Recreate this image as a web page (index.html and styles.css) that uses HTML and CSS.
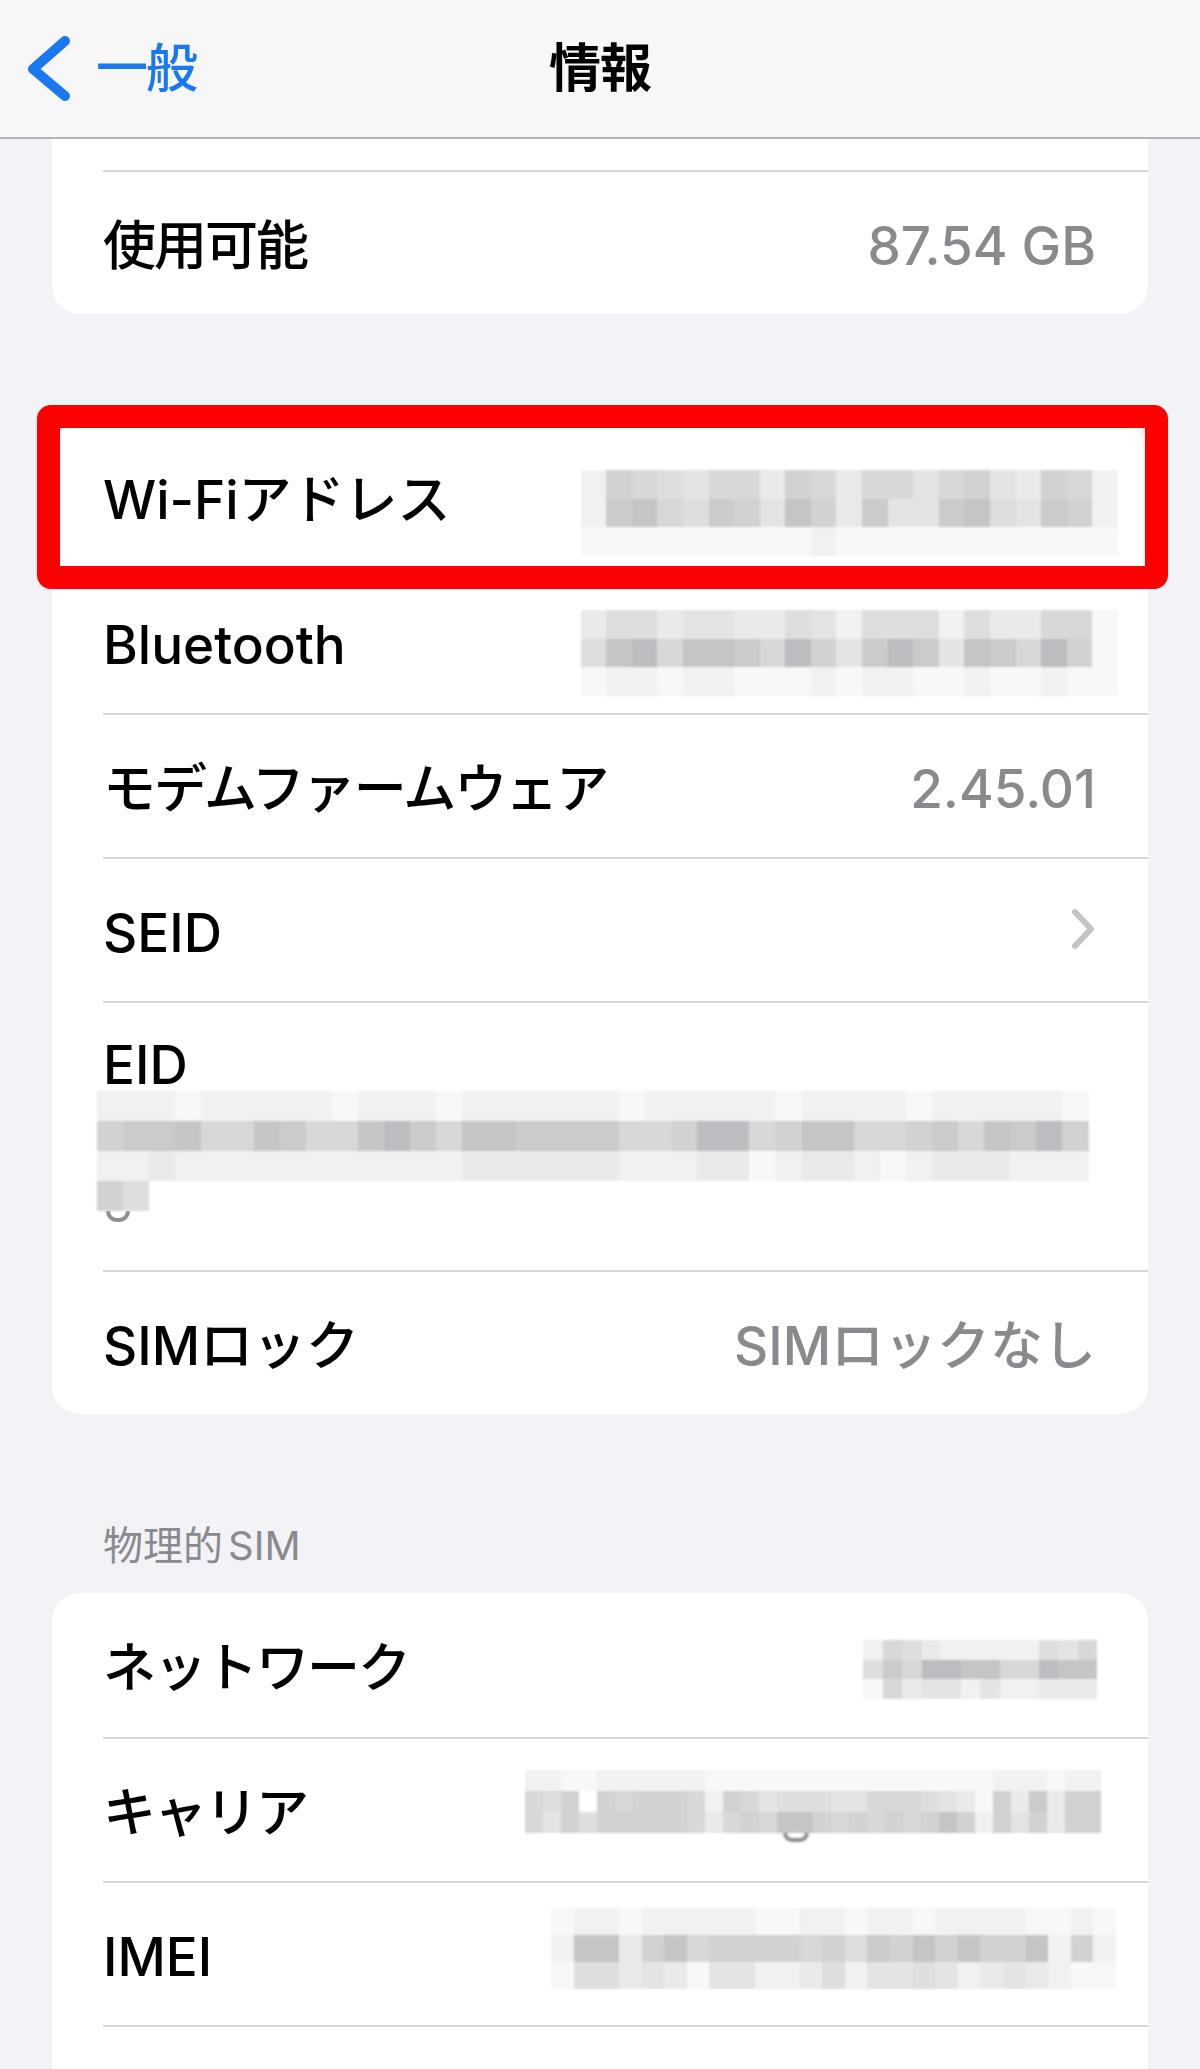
FILE: index.html
```html
<!DOCTYPE html>
<html lang="ja">
<head>
<meta charset="utf-8">
<title>情報</title>
<link rel="stylesheet" href="styles.css">
</head>
<body>
<header class="nav">
  <div class="nav-back">
    <svg class="chev-back" width="48" height="72" viewBox="0 0 48 72"><path d="M41 8 L9 36 L41 63" /></svg>
    <span class="back-label">一般</span>
  </div>
  <h1 class="nav-title">情報</h1>
  <div class="nav-right"></div>
</header>

<main class="content">
  <section class="card card-top">
    <div class="stub"></div>
    <div class="row">
      <span class="label ja">使用可能</span>
      <span class="value">87.54 GB</span>
    </div>
  </section>

  <section class="card card-gap">
    <div class="row row-hl">
      <span class="label">Wi-Fiアドレス</span>
      <div class="mosaic m-wifi">
        <i class="g1"></i><i class="g6"></i><i class="g5"></i><i class="g4"></i><i class="g3"></i><i class="g5"></i><i class="g5"></i><i class="g2"></i><i class="g6"></i><i class="g5"></i><i class="g2"></i><i class="g5"></i><i class="g5"></i><i class="g3"></i><i class="g5"></i><i class="g6"></i><i class="g3"></i><i class="g2"></i><i class="g6"></i><i class="g5"></i><i class="g1"></i>
        <i class="g1"></i><i class="g7"></i><i class="g8"></i><i class="g5"></i><i class="g4"></i><i class="g7"></i><i class="g6"></i><i class="g3"></i><i class="g8"></i><i class="g6"></i><i class="g2"></i><i class="g7"></i><i class="g3"></i><i class="g3"></i><i class="g7"></i><i class="g8"></i><i class="g4"></i><i class="g3"></i><i class="g7"></i><i class="g6"></i><i class="g1"></i>
        <i class="g0"></i><i class="g0"></i><i class="g0"></i><i class="g0"></i><i class="g0"></i><i class="g0"></i><i class="g0"></i><i class="g0"></i><i class="g0"></i><i class="g1"></i><i class="g0"></i><i class="g0"></i><i class="g0"></i><i class="g0"></i><i class="g0"></i><i class="g0"></i><i class="g0"></i><i class="g0"></i><i class="g0"></i><i class="g0"></i><i class="g0"></i>
      </div>
      <div class="highlight"></div>
    </div>
    <div class="row">
      <span class="label">Bluetooth</span>
      <div class="mosaic m-bt">
        <i class="g2"></i><i class="g4"></i><i class="g4"></i><i class="g2"></i><i class="g3"></i><i class="g3"></i><i class="g2"></i><i class="g2"></i><i class="g4"></i><i class="g3"></i><i class="g1"></i><i class="g4"></i><i class="g4"></i><i class="g4"></i><i class="g1"></i><i class="g4"></i><i class="g2"></i><i class="g2"></i><i class="g5"></i><i class="g5"></i><i class="g0"></i>
        <i class="g4"></i><i class="g8"></i><i class="g9"></i><i class="g5"></i><i class="g8"></i><i class="g8"></i><i class="g7"></i><i class="g5"></i><i class="g9"></i><i class="g6"></i><i class="g3"></i><i class="g7"></i><i class="g9"></i><i class="g7"></i><i class="g3"></i><i class="g8"></i><i class="g7"></i><i class="g5"></i><i class="g9"></i><i class="g6"></i><i class="g0"></i>
        <i class="g0"></i><i class="g1"></i><i class="g1"></i><i class="g0"></i><i class="g1"></i><i class="g1"></i><i class="g0"></i><i class="g0"></i><i class="g0"></i><i class="g1"></i><i class="g0"></i><i class="g1"></i><i class="g1"></i><i class="g0"></i><i class="g0"></i><i class="g1"></i><i class="g0"></i><i class="g0"></i><i class="g1"></i><i class="g0"></i><i class="g0"></i>
      </div>
    </div>
    <div class="row">
      <span class="label ja">モデムファームウェア</span>
      <span class="value">2.45.01</span>
    </div>
    <div class="row">
      <span class="label">SEID</span>
      <svg class="chev" width="26" height="44" viewBox="0 0 26 44"><path d="M5 5 L21 22 L5 39" /></svg>
    </div>
    <div class="row row-eid">
      <span class="label">EID</span>
      <div class="mosaic m-eid">
        <i class="g1"></i><i class="g1"></i><i class="g1"></i><i class="g0"></i><i class="g1"></i><i class="g1"></i><i class="g1"></i><i class="g1"></i><i class="g1"></i><i class="g0"></i><i class="g1"></i><i class="g1"></i><i class="g1"></i><i class="g0"></i><i class="g1"></i><i class="g1"></i><i class="g1"></i><i class="g1"></i><i class="g1"></i><i class="g1"></i><i class="g0"></i><i class="g1"></i><i class="g1"></i><i class="g1"></i><i class="g1"></i><i class="g1"></i><i class="g0"></i><i class="g1"></i><i class="g1"></i><i class="g1"></i><i class="g1"></i><i class="g0"></i><i class="g1"></i><i class="g1"></i><i class="g1"></i><i class="g1"></i><i class="g1"></i><i class="g0"></i>
        <i class="g6"></i><i class="g7"></i><i class="g7"></i><i class="g8"></i><i class="g5"></i><i class="g5"></i><i class="g8"></i><i class="g7"></i><i class="g5"></i><i class="g5"></i><i class="g8"></i><i class="g9"></i><i class="g7"></i><i class="g5"></i><i class="g8"></i><i class="g8"></i><i class="g7"></i><i class="g7"></i><i class="g7"></i><i class="g7"></i><i class="g5"></i><i class="g5"></i><i class="g6"></i><i class="g9"></i><i class="g9"></i><i class="g5"></i><i class="g6"></i><i class="g8"></i><i class="g8"></i><i class="g5"></i><i class="g5"></i><i class="g6"></i><i class="g7"></i><i class="g5"></i><i class="g8"></i><i class="g7"></i><i class="g9"></i><i class="g6"></i>
        <i class="g1"></i><i class="g1"></i><i class="g2"></i><i class="g1"></i><i class="g1"></i><i class="g1"></i><i class="g1"></i><i class="g1"></i><i class="g1"></i><i class="g1"></i><i class="g1"></i><i class="g1"></i><i class="g1"></i><i class="g1"></i><i class="g2"></i><i class="g2"></i><i class="g2"></i><i class="g2"></i><i class="g2"></i><i class="g2"></i><i class="g1"></i><i class="g1"></i><i class="g1"></i><i class="g2"></i><i class="g2"></i><i class="g0"></i><i class="g1"></i><i class="g2"></i><i class="g2"></i><i class="g1"></i><i class="g0"></i><i class="g1"></i><i class="g2"></i><i class="g2"></i><i class="g2"></i><i class="g1"></i><i class="g1"></i><i class="g1"></i>
        <i class="g6"></i><i class="g4"></i>
      </div>
      <span class="tail tail-eid"></span>
    </div>
    <div class="row">
      <span class="label">SIMロック</span>
      <span class="value">SIMロックなし</span>
    </div>
  </section>

  <h2 class="section-header">物理的<span class="hdr-latin">SIM</span></h2>

  <section class="card">
    <div class="row">
      <span class="label ja">ネットワーク</span>
      <div class="mosaic m-net">
        <i class="g1"></i><i class="g5"></i><i class="g4"></i><i class="g2"></i><i class="g1"></i><i class="g1"></i><i class="g1"></i><i class="g1"></i><i class="g1"></i><i class="g4"></i><i class="g3"></i><i class="g5"></i>
        <i class="g4"></i><i class="g7"></i><i class="g5"></i><i class="g9"></i><i class="g9"></i><i class="g8"></i><i class="g8"></i><i class="g5"></i><i class="g5"></i><i class="g9"></i><i class="g8"></i><i class="g8"></i>
        <i class="g0"></i><i class="g5"></i><i class="g2"></i><i class="g3"></i><i class="g3"></i><i class="g1"></i><i class="g3"></i><i class="g1"></i><i class="g1"></i><i class="g2"></i><i class="g2"></i><i class="g2"></i>
      </div>
    </div>
    <div class="row">
      <span class="label ja">キャリア</span>
      <div class="mosaic m-carrier">
        <i class="g1"></i><i class="g1"></i><i class="g0"></i><i class="g0"></i><i class="g1"></i><i class="g1"></i><i class="g1"></i><i class="g1"></i><i class="g1"></i><i class="g1"></i><i class="g0"></i><i class="g0"></i><i class="g0"></i><i class="g0"></i><i class="g0"></i><i class="g0"></i><i class="g0"></i><i class="g0"></i><i class="g0"></i><i class="g0"></i><i class="g0"></i><i class="g0"></i><i class="g0"></i><i class="g0"></i><i class="g0"></i><i class="g0"></i><i class="g1"></i><i class="g1"></i><i class="g1"></i><i class="g0"></i><i class="g1"></i><i class="g1"></i>
        <i class="g5"></i><i class="g4"></i><i class="g6"></i><i class="w"></i><i class="g6"></i><i class="g5"></i><i class="g6"></i><i class="g6"></i><i class="g6"></i><i class="g5"></i><i class="g1"></i><i class="g6"></i><i class="g5"></i><i class="g3"></i><i class="g4"></i><i class="g4"></i><i class="g4"></i><i class="g3"></i><i class="g3"></i><i class="g5"></i><i class="g5"></i><i class="g5"></i><i class="g4"></i><i class="g3"></i><i class="g2"></i><i class="g0"></i><i class="g6"></i><i class="g2"></i><i class="g7"></i><i class="g2"></i><i class="g6"></i><i class="g6"></i>
        <i class="g5"></i><i class="g3"></i><i class="g6"></i><i class="g4"></i><i class="g6"></i><i class="g6"></i><i class="g6"></i><i class="g6"></i><i class="g6"></i><i class="g5"></i><i class="g2"></i><i class="g5"></i><i class="g6"></i><i class="g5"></i><i class="g8"></i><i class="g8"></i><i class="g6"></i><i class="g5"></i><i class="g6"></i><i class="g5"></i><i class="g6"></i><i class="g5"></i><i class="g6"></i><i class="g8"></i><i class="g6"></i><i class="g1"></i><i class="g6"></i><i class="g3"></i><i class="g6"></i><i class="g2"></i><i class="g6"></i><i class="g6"></i>
        <span class="tail tail-g"></span>
      </div>
    </div>
    <div class="row">
      <span class="label">IMEI</span>
      <div class="mosaic m-imei">
        <i class="g0"></i><i class="g1"></i><i class="g1"></i><i class="g0"></i><i class="g1"></i><i class="g1"></i><i class="g1"></i><i class="g1"></i><i class="g1"></i><i class="g0"></i><i class="g0"></i><i class="g1"></i><i class="g1"></i><i class="g0"></i><i class="g1"></i><i class="g1"></i><i class="g0"></i><i class="g1"></i><i class="g1"></i><i class="g1"></i><i class="g1"></i><i class="g0"></i><i class="g0"></i><i class="g1"></i><i class="g0"></i>
        <i class="g1"></i><i class="g8"></i><i class="g8"></i><i class="g2"></i><i class="g6"></i><i class="g8"></i><i class="g5"></i><i class="g6"></i><i class="g6"></i><i class="g6"></i><i class="g6"></i><i class="g5"></i><i class="g6"></i><i class="g4"></i><i class="g7"></i><i class="g6"></i><i class="g8"></i><i class="g6"></i><i class="g8"></i><i class="g6"></i><i class="g6"></i><i class="g8"></i><i class="g1"></i><i class="g6"></i><i class="g1"></i>
        <i class="g0"></i><i class="g4"></i><i class="g4"></i><i class="g2"></i><i class="g3"></i><i class="g2"></i><i class="g0"></i><i class="g3"></i><i class="g3"></i><i class="g1"></i><i class="g1"></i><i class="g2"></i><i class="g4"></i><i class="g1"></i><i class="g3"></i><i class="g3"></i><i class="g4"></i><i class="g3"></i><i class="g1"></i><i class="g2"></i><i class="g3"></i><i class="g2"></i><i class="g1"></i><i class="g0"></i><i class="g0"></i>
      </div>
    </div>
    <div class="row"></div>
  </section>
</main>
</body>
</html>
```
FILE: styles.css
```css
html, body {
  margin: 0;
  padding: 0;
}

body {
  width: 1200px;
  background: #f2f2f7;
  font-family: Inter, "Noto Sans CJK JP", sans-serif;
  color: #000;
  overflow: hidden;
}

/* Navigation bar */
.nav {
  height: 137px;
  display: grid;
  grid-template-columns: 1fr auto 1fr;
  align-items: center;
  background: #f7f7f7;
  border-bottom: 2px solid #b4b4b7;
  position: relative;
  z-index: 2;
}

.nav-back {
  display: flex;
  align-items: center;
  padding-left: 24px;
  gap: 24px;
}

.chev-back path {
  fill: none;
  stroke: #1a78f0;
  stroke-width: 10;
  stroke-linecap: round;
  stroke-linejoin: round;
}

.back-label {
  font-size: 52px;
  line-height: 64px;
  font-weight: 500;
  letter-spacing: -2px;
  color: #1a78f0;
}

.nav-title {
  margin: 0;
  font-size: 52px;
  line-height: 64px;
  font-weight: 700;
  letter-spacing: -1px;
}

/* Content */
.content {
  padding: 0 52px;
}

.card {
  background: #fff;
  border-radius: 28px;
  padding-left: 51px;
}

.card-top {
  border-radius: 0 0 28px 28px;
}

.card-gap {
  margin-top: 111px;
}

.stub {
  height: 31px;
}

.row {
  position: relative;
  display: flex;
  align-items: center;
  height: 144px;
  box-sizing: border-box;
  padding: 6px 52px 0 0;
  border-top: 2px solid #d6d6da;
}

.card > .row:first-child {
  border-top: 0;
}

.label {
  font-size: 53px;
  line-height: 64px;
  font-weight: 500;
  white-space: nowrap;
}

.label.ja {
  letter-spacing: -2px;
}

.value {
  margin-left: auto;
  font-size: 53px;
  line-height: 64px;
  font-weight: 500;
  color: #8a8a8e;
  white-space: nowrap;
}

.chev {
  margin-left: auto;
  margin-top: -8px;
}

.chev path {
  fill: none;
  stroke: #c4c4c7;
  stroke-width: 6;
  stroke-linecap: round;
  stroke-linejoin: round;
}

/* Highlight box around the Wi-Fi row */
.highlight {
  position: absolute;
  z-index: 1;
  top: -20px;
  bottom: -20px;
  left: -66px;
  right: -20px;
  border: 23px solid #fe0000;
  border-radius: 14px;
  pointer-events: none;
}

/* EID row */
.row-eid {
  height: 269px;
  flex-direction: column;
  align-items: flex-start;
  padding-top: 30px;
}

/* Pixelated (blurred) values */
.mosaic {
  position: relative;
  display: grid;
  grid-template-columns: repeat(var(--cols), var(--cw));
  grid-auto-rows: var(--ch);
  align-self: flex-start;
  margin-left: auto;
  filter: blur(0.8px);
}

.mosaic i {
  display: block;
}

.m-wifi {
  --cols: 21; --cw: 25.6px; --ch: 28.5px;
  margin-top: 39px;
  margin-right: -22px;
}

.m-bt {
  --cols: 21; --cw: 25.6px; --ch: 28.5px;
  margin-top: 33px;
  margin-right: -22px;
}

.m-eid {
  --cols: 38; --cw: 26.1px; --ch: 30px;
  margin: -6px 0 0 -6px;
}

.m-net {
  --cols: 12; --cw: 19.5px; --ch: 19.5px;
  margin-top: 41px;
  margin-right: -1px;
}

.m-carrier {
  --cols: 32; --cw: 18px; --ch: 21px;
  margin-top: 25px;
  margin-right: -5px;
}

.m-imei {
  --cols: 25; --cw: 22.6px; --ch: 27px;
  margin-top: 19px;
  margin-right: -20px;
}

.w  { background: #ffffff; }
.g0 { background: #f8f8f9; }
.g1 { background: #f1f1f3; }
.g2 { background: #eaeaec; }
.g3 { background: #e4e4e6; }
.g4 { background: #dedee0; }
.g5 { background: #d8d8da; }
.g6 { background: #d2d2d4; }
.g7 { background: #cbcbce; }
.g8 { background: #c5c5c8; }
.g9 { background: #bdbdc1; }

/* partial glyph bottoms peeking out under the mosaic */
.tail {
  display: block;
  box-sizing: border-box;
  border: 4px solid #8e8e93;
  border-top: 0;
  border-radius: 0 0 14px 14px;
}

.tail-eid {
  width: 24px;
  height: 11px;
  margin-left: 3px;
}

.tail-g {
  position: absolute;
  left: 258px;
  top: 100%;
  width: 26px;
  height: 9px;
}

.section-header {
  margin: 0;
  padding: 108px 0 23px 51px;
  font-size: 40px;
  line-height: 48px;
  font-weight: 400;
  color: #8a8a8e;
}

.hdr-latin {
  margin-left: 5px;
}
```
